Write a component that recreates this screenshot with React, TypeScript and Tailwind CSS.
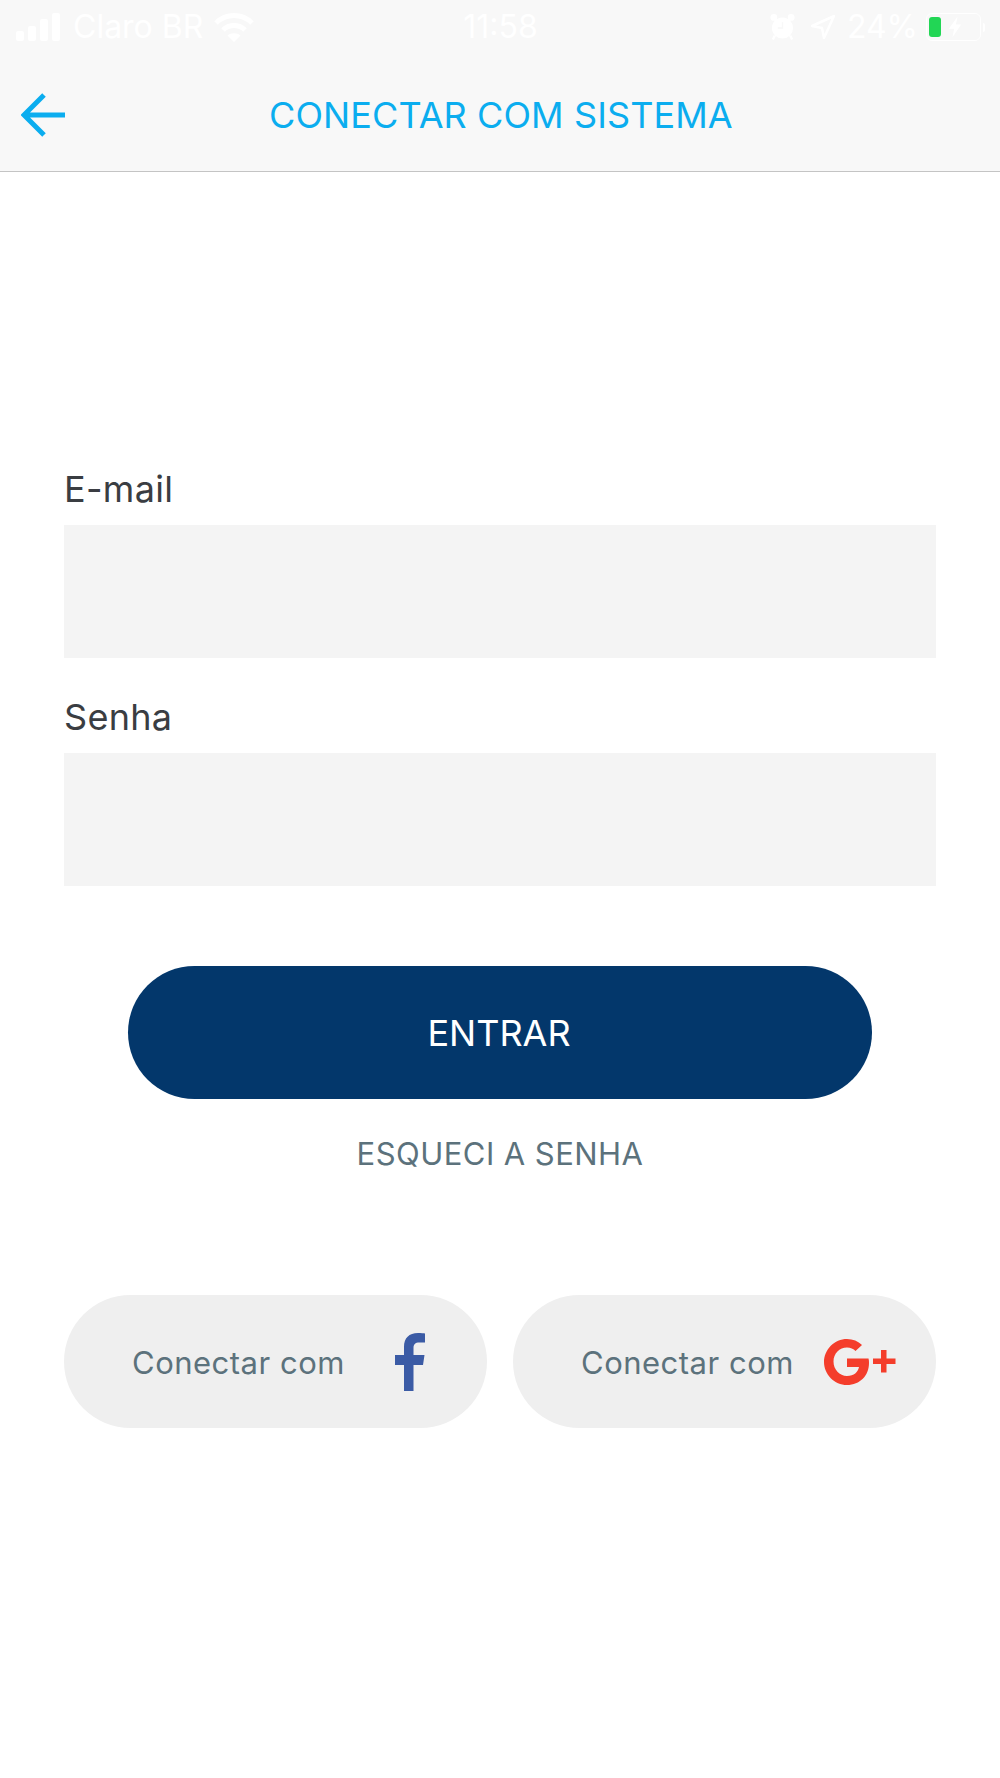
const font = "[font-family:Inter,'Liberation_Sans',sans-serif]";

function Signal() {
  return (
    <svg width="44" height="28" viewBox="0 0 44 28" fill="#fff">
      <rect x="0" y="18" width="8" height="10" rx="2" />
      <rect x="12" y="13" width="8" height="15" rx="2" />
      <rect x="24" y="6" width="8" height="22" rx="2" />
      <rect x="36" y="0" width="8" height="28" rx="2" />
    </svg>
  );
}

function Wifi() {
  return (
    <svg width="40" height="30" viewBox="0 0 40 30" fill="none" stroke="#fff" strokeWidth="5">
      <path d="M2 11 C12 1 28 1 38 11" />
      <path d="M9 18 C15 12 25 12 31 18" />
      <path d="M20 30 L13.5 23.5 C17 20.5 23 20.5 26.5 23.5 Z" fill="#fff" stroke="none" />
    </svg>
  );
}

function Alarm() {
  return (
    <svg width="25" height="28" viewBox="0 0 26 28" fill="#fff">
      <circle cx="13" cy="15" r="11" />
      <circle cx="4" cy="4" r="3.5" />
      <circle cx="22" cy="4" r="3.5" />
      <path d="M5 23 L3 27 M21 23 L23 27" stroke="#fff" strokeWidth="2.5" />
      <path d="M13 9 V15 H8" stroke="#f8f8f8" strokeWidth="1.5" fill="none" />
    </svg>
  );
}

function Location() {
  return (
    <svg width="24" height="24" viewBox="0 0 24 24" fill="none" stroke="#fff" strokeWidth="2.5" strokeLinejoin="round">
      <path d="M23 1 L1 11 L11 13 L13 23 Z" />
    </svg>
  );
}

function Battery() {
  return (
    <div className="relative flex h-[28px] w-[55px] items-center rounded-[6px] border border-white p-[2px]">
      <div className="h-[20px] w-[12px] rounded-[3px] bg-[#22d655]" />
      <svg className="absolute left-[21px] top-[1px]" width="14" height="24" viewBox="0 0 16 24" fill="#fff">
        <path d="M11 0 L1 14 H7 L5 24 L15 9 H9 Z" />
      </svg>
      <div className="absolute right-[-5px] top-[9px] h-[9px] w-[2px] rounded-r bg-white" />
    </div>
  );
}

function Facebook() {
  return (
    <svg width="30" height="58" viewBox="0 0 30 58" fill="#3b5ba5">
      <path d="M9 58 V32 H0 V22 H9 V14 C9 5 14 0 23 0 C26 0 29 0.3 30 0.5 V9.5 H24.5 C20 9.5 18.5 11.5 18.5 15 V22 H29.5 L28 32 H18.5 V58 Z" />
    </svg>
  );
}

function GooglePlus() {
  return (
    <svg width="72" height="46" viewBox="0 0 72 46" fill="#f43d2b">
      <path d="M23 0 C29 0 34 2 38 6 L31.5 12 C29.5 10 26.5 8.5 23 8.5 C15.5 8.5 9.5 14.5 9.5 22.5 C9.5 30.5 15.5 37 23 37 C30 37 34 33 35 28 H23 V19.5 H44.5 C45 21 45 22.5 45 24 C45 36.5 36 46 23 46 C10.5 46 0 35.5 0 23 C0 10.5 10.5 0 23 0 Z" />
      <path d="M57 11 H62.5 V19.5 H71.5 V25 H62.5 V33.5 H57 V25 H49 V19.5 H57 Z" />
    </svg>
  );
}

function Field({ label, className }: { label: string; className: string }) {
  return (
    <div className={className}>
      <div className="pb-[1px] text-[36px] leading-[41px] tracking-[0.3px] text-[#3a3d42]">{label}</div>
      <div className="mt-[14px] h-[133px] bg-[#f4f4f4]" />
    </div>
  );
}

function Social({ children, gap }: { children: React.ReactNode; gap: string }) {
  return (
    <div className="flex h-[133px] flex-1 items-center rounded-full bg-[#efefef] pl-[68px]">
      <span className={`pt-[4px] text-[31px] tracking-[0.5px] text-[#5c727c] ${gap}`}>Conectar com</span>
      {children}
    </div>
  );
}

export default function App() {
  return (
    <div className={`h-[1778px] w-[1000px] bg-white ${font}`}>
      <header className="h-[172px] border-b border-[#c4c4c4] bg-[#f8f8f8]">
        <div className="grid h-[54px] grid-cols-[1fr_auto_1fr] items-center pl-[16px] pr-[15px] text-[32px] text-white">
          <div className="flex items-center">
            <Signal />
            <span className="ml-[13px] mr-[11px]">Claro BR</span>
            <Wifi />
          </div>
          <span>11:58</span>
          <div className="flex items-center justify-end">
            <Alarm />
            <span className="ml-[16px]"><Location /></span>
            <span className="ml-[12px]">24%</span>
            <span className="ml-[8px] mr-[4px]"><Battery /></span>
          </div>
        </div>
        <div className="flex h-[116px] items-center pt-[6px]">
          <svg className="ml-[21px] shrink-0" width="44" height="44" viewBox="0 0 44 44" fill="none" stroke="#0badef" strokeWidth="5">
            <path d="M44 22 H3 M23 2 L3 22 L23 42" />
          </svg>
          <h1 className="ml-[204px] text-[36px] font-normal leading-none tracking-[0.1px] text-[#0badef]">CONECTAR COM SISTEMA</h1>
        </div>
      </header>
      <main className="flex flex-col px-[64px]">
        <Field label="E-mail" className="mt-[297px]" />
        <Field label="Senha" className="mt-[39px]" />
        <button className="mx-[64px] mt-[80px] flex h-[133px] items-center justify-center rounded-full bg-[#03376b] pr-[2px] text-[36px] text-white">
          ENTRAR
        </button>
        <div className="mt-[36px] text-center text-[31px] leading-[38px] tracking-[0.45px] text-[#5c727c]">ESQUECI A SENHA</div>
        <div className="mt-[122px] flex gap-[26px]">
          <Social gap="mr-[50px]"><Facebook /></Social>
          <Social gap="mr-[30px]"><GooglePlus /></Social>
        </div>
      </main>
    </div>
  );
}
